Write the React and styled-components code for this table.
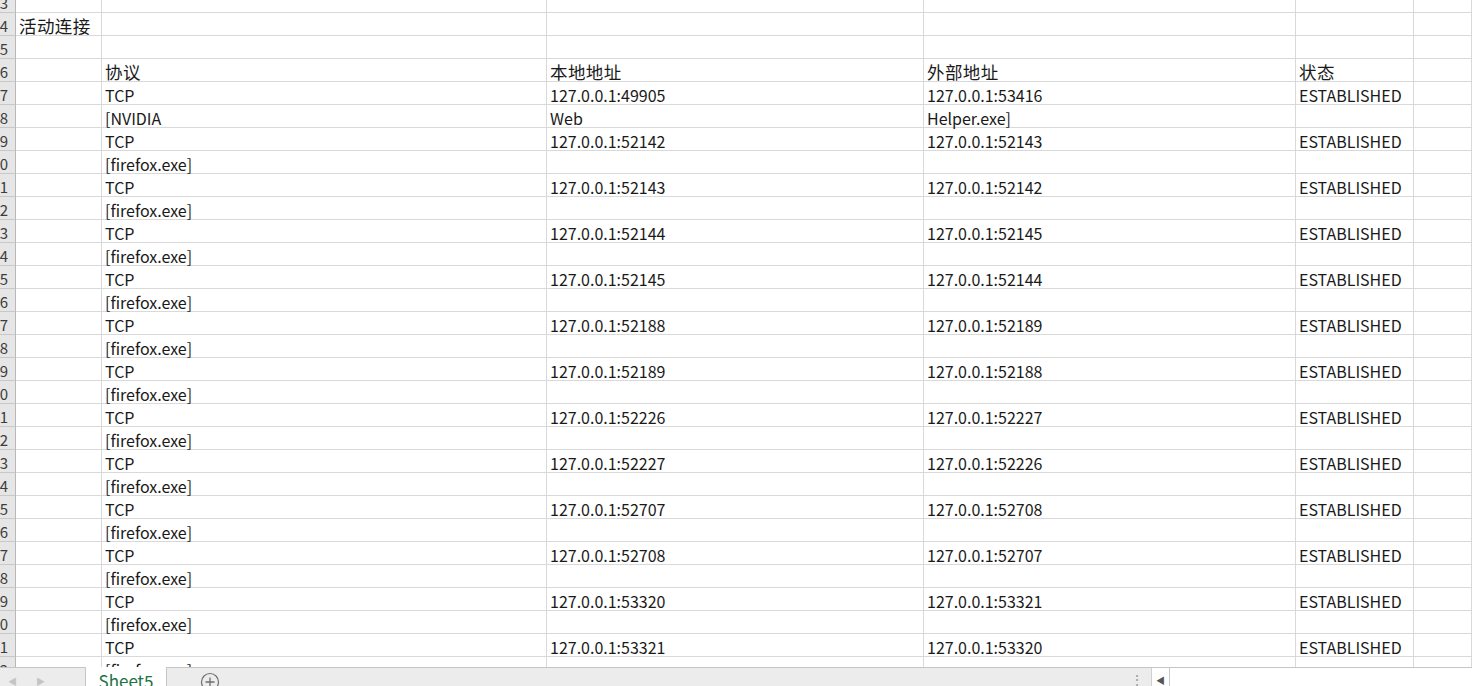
import React from 'react';
import styled, {createGlobalStyle} from 'styled-components';

const GlobalStyle = createGlobalStyle`
	html, body {
		margin: 0;
		padding: 0;
		background: #ffffff;
		overflow: hidden;
	}
	* {
		box-sizing: border-box;
	}
`;

const COLS = '16px 86px 445px 377px 372px 118px 1fr';

// [row number, A, B, C, D, E]
const ROWS = [
	[3, '', '', '', '', ''],
	[4, '活动连接', '', '', '', ''],
	[5, '', '', '', '', ''],
	[6, '', '协议', '本地地址', '外部地址', '状态'],
	[7, '', 'TCP', '127.0.0.1:49905', '127.0.0.1:53416', 'ESTABLISHED'],
	[8, '', '[NVIDIA', 'Web', 'Helper.exe]', ''],
];

const PAIRS = [
	['52142', '52143'],
	['52143', '52142'],
	['52144', '52145'],
	['52145', '52144'],
	['52188', '52189'],
	['52189', '52188'],
	['52226', '52227'],
	['52227', '52226'],
	['52707', '52708'],
	['52708', '52707'],
	['53320', '53321'],
	['53321', '53320'],
];

PAIRS.forEach(([local, remote], i) => {
	const n = 9 + i * 2;
	ROWS.push([n, '', 'TCP', '127.0.0.1:' + local, '127.0.0.1:' + remote, 'ESTABLISHED']);
	ROWS.push([n + 1, '', '[firefox.exe]', '', '', '']);
});

const isCjk = text => /[\u4e00-\u9fff]/.test(text);

export default function App() {
	return (
		<>
			<GlobalStyle />
			<Workbook>
				<SheetArea>
					{ROWS.map((row, idx) => (
						<Row key={row[0]} $short={idx === 0}>
							<RowHead>
								<span>{row[0]}</span>
							</RowHead>
							{row.slice(1).map((text, c) => (
								<Cell key={c} $cjk={isCjk(text)}>{text}</Cell>
							))}
							<Cell />
						</Row>
					))}
				</SheetArea>
				<BottomBar>
					<TabStrip>
						<NavArrow>◀</NavArrow>
						<NavArrow>▶</NavArrow>
						<SheetTab>Sheet5</SheetTab>
						<AddSheet>
							<svg width="20" height="20" viewBox="0 0 20 20">
								<circle cx="10" cy="10" r="8.5" fill="none" stroke="#6e6e6e" strokeWidth="1.2"/>
								<path d="M10 5.5v9M5.5 10h9" stroke="#6e6e6e" strokeWidth="1.3"/>
							</svg>
						</AddSheet>
					</TabStrip>
					<Splitter>⋮</Splitter>
					<HScroll>
						<ScrollBtn>◀</ScrollBtn>
						<ScrollTrack />
					</HScroll>
				</BottomBar>
			</Workbook>
		</>
	);
}

const Workbook = styled.div`
	display: flex;
	flex-direction: column;
	width: 1472px;
	height: 686px;
	overflow: hidden;
	font-family: "Noto Sans CJK SC", "Noto Sans", sans-serif;
`;

const SheetArea = styled.div`
	height: 667px;
	flex-shrink: 0;
	overflow: hidden;
`;

const Row = styled.div`
	display: grid;
	grid-template-columns: ${COLS};
	height: ${p => (p.$short ? '13px' : '23px')};
`;

const RowHead = styled.div`
	display: flex;
	justify-content: flex-end;
	align-items: flex-end;
	overflow: hidden;
	background: #e6e6e6;
	border-right: 1px solid #b8b8b8;
	border-bottom: 1px solid #c8c8c8;
	color: #3c3c3c;
	font-size: 15px;
	line-height: 19px;
	padding-right: 7px;

	span {
		display: block;
		white-space: nowrap;
	}
`;

const Cell = styled.div`
	display: flex;
	align-items: flex-end;
	overflow: visible;
	white-space: nowrap;
	border-right: 1px solid #d9d9d9;
	border-bottom: 1px solid #d9d9d9;
	padding: 0 3px 0 3px;
	font-size: ${p => (p.$cjk ? '17.5px' : '16px')};
	letter-spacing: ${p => (p.$cjk ? '0.4px' : '0')};
	line-height: 18px;
	color: #1a1a1a;
`;

const BottomBar = styled.div`
	display: flex;
	align-items: stretch;
	height: 24px;
	flex-shrink: 0;
	background: #ececec;
	border-top: 1px solid #c6c6c6;
`;

const TabStrip = styled.div`
	display: flex;
	align-items: flex-start;
	width: 1128px;
`;

const NavArrow = styled.div`
	width: 28px;
	padding-left: 8px;
	padding-top: 3px;
	font-size: 9px;
	line-height: 22px;
	color: #c4c4c4;
`;

const SheetTab = styled.div`
	margin-left: 29px;
	width: 82px;
	height: 24px;
	margin-top: -1px;
	padding-top: 3px;
	background: #ffffff;
	border-left: 1px solid #c6c6c6;
	border-right: 1px solid #c6c6c6;
	color: #217346;
	font-size: 17px;
	line-height: 22px;
	text-align: center;
`;

const AddSheet = styled.div`
	margin-left: 33px;
	padding-top: 4px;
	display: flex;
`;

const Splitter = styled.div`
	width: 18px;
	padding-top: 1px;
	color: #9a9a9a;
	font-size: 14px;
	line-height: 20px;
	text-align: center;
`;

const HScroll = styled.div`
	display: flex;
	flex: 1;
	background: #ffffff;
	border-left: 1px solid #d0d0d0;
	margin-left: 5px;
`;

const ScrollBtn = styled.div`
	width: 18px;
	padding-top: 2px;
	border-right: 1px solid #c8c8c8;
	color: #555555;
	font-size: 9px;
	line-height: 22px;
	text-align: center;
`;

const ScrollTrack = styled.div`
	flex: 1;
	background: #ffffff;
`;
